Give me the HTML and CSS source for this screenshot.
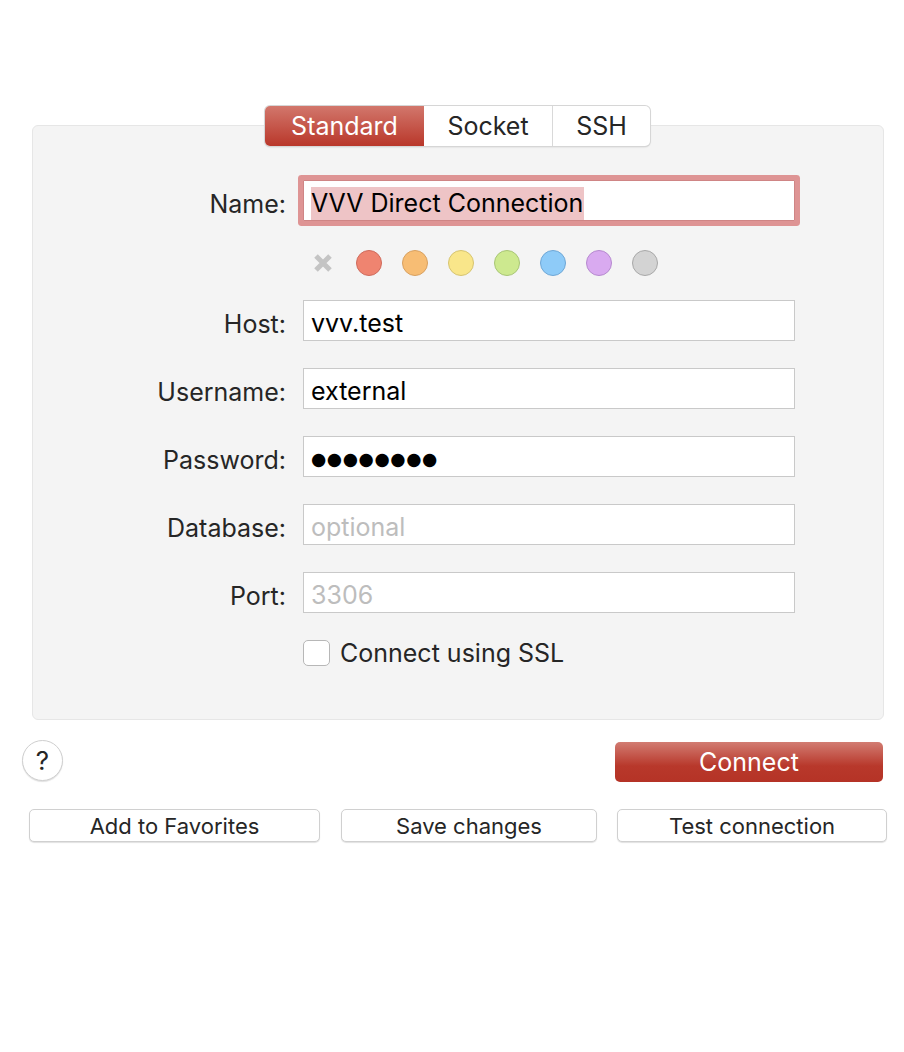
FILE: index.html
```html
<!DOCTYPE html>
<html>
<head>
<meta charset="utf-8">
<link rel="stylesheet" href="styles.css">
</head>
<body>
<div class="window">
  <div class="tabs">
    <div class="tab tab-active tab-standard">Standard</div>
    <div class="tab tab-socket">Socket</div>
    <div class="tab tab-ssh">SSH</div>
  </div>
  <div class="panel">
    <div class="row">
      <div class="label">Name:</div>
      <div class="input input-focus"><span class="selected">VVV Direct Connection</span></div>
    </div>
    <div class="colors">
      <div class="swatch swatch-none">
        <svg width="22" height="22" viewBox="0 0 22 22"><path d="M4 4 L18 18 M18 4 L4 18" stroke="#c4c4c4" stroke-width="5" stroke-linecap="butt"/></svg>
      </div>
      <div class="swatch dot dot-red"></div>
      <div class="swatch dot dot-orange"></div>
      <div class="swatch dot dot-yellow"></div>
      <div class="swatch dot dot-green"></div>
      <div class="swatch dot dot-blue"></div>
      <div class="swatch dot dot-purple"></div>
      <div class="swatch dot dot-gray"></div>
    </div>
    <div class="row">
      <div class="label">Host:</div>
      <div class="input">vvv.test</div>
    </div>
    <div class="row">
      <div class="label">Username:</div>
      <div class="input">external</div>
    </div>
    <div class="row">
      <div class="label">Password:</div>
      <div class="input"><span class="secret">●●●●●●●●</span></div>
    </div>
    <div class="row">
      <div class="label">Database:</div>
      <div class="input placeholder">optional</div>
    </div>
    <div class="row">
      <div class="label">Port:</div>
      <div class="input placeholder">3306</div>
    </div>
    <div class="check-row">
      <div class="checkbox"></div>
      <div class="check-label">Connect using SSL</div>
    </div>
  </div>
  <div class="actions">
    <div class="help">?</div>
    <div class="btn-primary">Connect</div>
  </div>
  <div class="buttons">
    <div class="btn btn-fav">Add to Favorites</div>
    <div class="btn btn-save">Save changes</div>
    <div class="btn btn-test">Test connection</div>
  </div>
</div>
</body>
</html>
```
FILE: styles.css
```css
* { box-sizing: border-box; }
html, body { margin: 0; padding: 0; background: #ffffff; }
body {
  font-family: Inter, "Liberation Sans", sans-serif;
  color: #262626;
  width: 904px;
  height: 1052px;
}
.window {
  display: flex;
  flex-direction: column;
  padding-top: 106px;
}
.tabs {
  position: relative;
  z-index: 2;
  align-self: flex-start;
  margin-left: 265px;
  margin-bottom: -21px;
  display: flex;
  height: 40px;
  border-radius: 5px;
  background: #ffffff;
  box-shadow: 0 0 0 1px #d6d6d6, 0 1px 2px rgba(0,0,0,0.18);
}
.tab {
  display: flex;
  align-items: center;
  justify-content: center;
  font-size: 25px;
  height: 40px;
  color: #262626;
}
.tab-standard { width: 159px; }
.tab-socket { width: 129px; border-right: 1px solid #d9d9d9; }
.tab-ssh { width: 97px; }
.tab-active {
  color: #ffffff;
  border-radius: 5px 0 0 5px;
  background: linear-gradient(#d2776c, #b9372a);
}
.panel {
  margin-left: 32px;
  width: 852px;
  height: 595px;
  background: #f4f4f4;
  border: 1px solid #e6e6e6;
  border-radius: 6px;
  padding-top: 54px;
  display: flex;
  flex-direction: column;
}
.row {
  display: grid;
  grid-template-columns: 254px 492px;
  column-gap: 16px;
  align-items: center;
  margin-bottom: 27px;
}
.label {
  text-align: right;
  font-size: 25px;
  color: #262626;
  padding-top: 6px;
  padding-right: 1px;
}
.input {
  height: 41px;
  background: #ffffff;
  border: 1px solid #c9c9c9;
  font-size: 25px;
  color: #000000;
  display: flex;
  align-items: center;
  padding-left: 7px;
  padding-top: 5px;
}
.input-focus {
  border: 1px solid #cf8585;
  box-shadow: 0 0 0 5px #de9494;
  border-radius: 1px;
}
.selected {
  background: #eec4c6;
  padding: 1px 1px 2px 0;
}
.secret {
  font-family: "DejaVu Sans", sans-serif;
  font-size: 17.5px;
  letter-spacing: 0.6px;
}
.placeholder { color: #bdbdbd; }
.colors {
  display: flex;
  gap: 20px;
  margin-left: 277px;
  margin-top: 2px;
  margin-bottom: 24px;
}
.swatch {
  width: 26px;
  height: 26px;
  display: flex;
  align-items: center;
  justify-content: center;
}
.dot { border-radius: 50%; border: 1.5px solid; }
.dot-red { background: #ef8470; border-color: #cf6a5b; }
.dot-orange { background: #f7bd74; border-color: #d8a05f; }
.dot-yellow { background: #f9e68a; border-color: #d6c470; }
.dot-green { background: #cde98f; border-color: #a8c675; }
.dot-blue { background: #8ecbf8; border-color: #6ea7d6; }
.dot-purple { background: #d9aaf0; border-color: #b689cf; }
.dot-gray { background: #d3d3d3; border-color: #a8a8a8; }
.check-row {
  display: flex;
  align-items: center;
  gap: 10px;
  margin-left: 270px;
  margin-top: -3px;
}
.checkbox {
  width: 27px;
  height: 26px;
  background: #ffffff;
  border: 1px solid #b7b7b7;
  border-radius: 5px;
}
.check-label { font-size: 25px; color: #262626; padding-top: 1px; }
.actions {
  display: flex;
  justify-content: space-between;
  align-items: flex-start;
  margin-top: 20px;
  padding-left: 22px;
  padding-right: 21px;
}
.help {
  width: 41px;
  height: 41px;
  border-radius: 50%;
  background: #ffffff;
  border: 1px solid #cfcfcf;
  box-shadow: 0 1px 1px rgba(0,0,0,0.12);
  display: flex;
  align-items: center;
  justify-content: center;
  font-size: 26px;
  color: #262626;
}
.btn-primary {
  margin-top: 2px;
  width: 268px;
  height: 40px;
  border-radius: 5px;
  background: linear-gradient(#d27c72, #b8382b 60%, #b53326);
  color: #ffffff;
  font-size: 25px;
  display: flex;
  align-items: center;
  justify-content: center;
}
.buttons {
  display: flex;
  margin-top: 27px;
  padding-left: 29px;
}
.btn {
  height: 33px;
  border-radius: 5px;
  background: #ffffff;
  border: 1px solid #d0d0d0;
  box-shadow: 0 1px 1px rgba(0,0,0,0.12);
  font-size: 22px;
  color: #262626;
  display: flex;
  align-items: center;
  justify-content: center;
}
.btn-fav { width: 291px; }
.btn-save { width: 256px; margin-left: 21px; }
.btn-test { width: 270px; margin-left: 20px; }
```
